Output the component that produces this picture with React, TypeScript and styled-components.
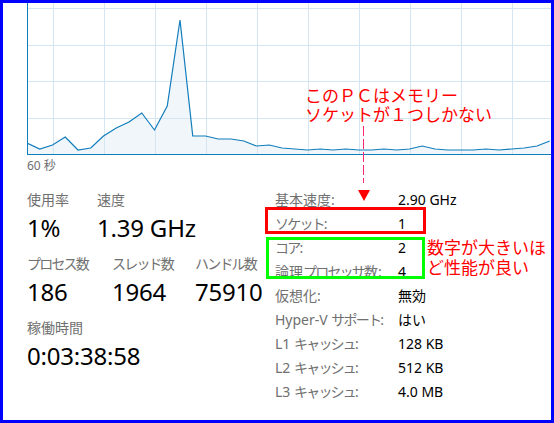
import React from 'react';
import styled, { createGlobalStyle } from 'styled-components';

const GlobalStyle = createGlobalStyle`
  html, body {
    margin: 0;
    padding: 0;
    background: #ffffff;
  }
  body {
    font-family: "Noto Sans", "Noto Sans CJK JP", sans-serif;
  }
`;

const Frame = styled.div`
  position: relative;
  width: 554px;
  height: 423px;
  box-sizing: border-box;
  border: 3px solid #0000ff;
  background: #ffffff;
  overflow: hidden;
`;

const ChartArea = styled.div`
  padding-left: 24px;
  height: 152px;
  overflow: hidden;
`;

const ChartCaption = styled.div`
  margin: 3px 0 0 24px;
  font-size: 12px;
  line-height: 16px;
  color: #707070;
`;

const Details = styled.div`
  display: grid;
  grid-template-columns: 248px 1fr;
  padding-left: 24px;
  margin-top: 13px;
`;

const LeftCol = styled.div`
  display: flex;
  flex-direction: column;
  gap: 12px;
  padding-top: 4px;
`;

const StatRow = styled.div`
  display: flex;
`;

const Stat = styled.div<{ $w: number }>`
  width: ${(p) => p.$w}px;
  display: flex;
  flex-direction: column;
  gap: 4px;
`;

const StatLabel = styled.div`
  font-size: 14px;
  line-height: 18px;
  color: #707070;
  white-space: nowrap;
`;

const StatValue = styled.div`
  font-size: 24px;
  line-height: 30px;
  color: #000000;
  white-space: nowrap;
  letter-spacing: -0.2px;
`;

const InfoList = styled.div`
  display: grid;
  grid-template-columns: 123px 1fr;
  grid-auto-rows: 24px;
  align-items: center;
  font-size: 14px;
`;

const InfoLabel = styled.div`
  color: #707070;
  white-space: nowrap;
`;

const InfoValue = styled.div`
  color: #000000;
  white-space: nowrap;
`;

// katakana in the UI font is a little narrower than full width
const Kana = styled.span`
  letter-spacing: -1.8px;
`;

const tighten = (s: string) =>
  s.split(/([\u30A0-\u30FF]+)/).map((part, i) =>
    /[\u30A0-\u30FF]/.test(part) ? <Kana key={i}>{part}</Kana> : part
  );

const Callout = styled.div<{ $x: number; $y: number; $size: number; $lh: number }>`
  position: absolute;
  left: ${(p) => p.$x}px;
  top: ${(p) => p.$y}px;
  font-family: "Noto Sans CJK JP", sans-serif;
  font-size: ${(p) => p.$size}px;
  line-height: ${(p) => p.$lh}px;
  color: #ff0000;
  white-space: pre;
`;

const DashLine = styled.div`
  position: absolute;
  left: 360px;
  top: 123px;
  width: 1px;
  height: 57px;
  background: repeating-linear-gradient(
    to bottom,
    #ff2a6d 0 10px,
    transparent 10px 13px
  );
`;

const Arrow = styled.div`
  position: absolute;
  left: 355px;
  top: 187px;
  width: 0;
  height: 0;
  border-left: 6px solid transparent;
  border-right: 6px solid transparent;
  border-top: 11px solid #ff0000;
`;

const MarkBox = styled.div<{ $x: number; $y: number; $w: number; $h: number; $c: string }>`
  position: absolute;
  left: ${(p) => p.$x}px;
  top: ${(p) => p.$y}px;
  width: ${(p) => p.$w}px;
  height: ${(p) => p.$h}px;
  box-sizing: border-box;
  border: 3px solid ${(p) => p.$c};
`;

const cpu = [
  143, 149, 145, 137, 150, 148, 136, 128, 122, 113, 130, 106, 20, 136, 136, 139,
  139, 141, 146, 145, 148, 149, 150, 149, 150, 149, 150, 150, 149, 150, 149, 146,
  149, 150, 150, 150, 149, 150, 149, 148, 146, 141,
];

const CpuChart = () => {
  const pts = cpu.map((y, i) => `${(i * 12.75).toFixed(2)},${y - 3}`);
  const line = pts.join(' ');
  const area = `0,151 ${line} ${((cpu.length - 1) * 12.75).toFixed(2)},151`;
  const vLines = [26, 77, 128, 179, 230, 281, 332, 383, 434, 485];
  const hLines = [5, 42, 78, 115];
  return (
    <svg width="524" height="152" viewBox="0 0 524 152">
      <polygon points={area} fill="#f1f6fa" />
      <g stroke="#d3e6f2" strokeWidth={1}>
        {vLines.map((x) => (
          <path key={`v${x}`} d={`M${x + 0.5} 0V151`} />
        ))}
        {hLines.map((y) => (
          <path key={`h${y}`} d={`M0 ${y + 0.5}H524`} />
        ))}
      </g>
      <polyline points={line} fill="none" stroke="#117dbb" strokeWidth={1.2} />
      <path d="M0.5 0V152M0 151.5H524" stroke="#117dbb" strokeWidth={1} fill="none" />
    </svg>
  );
};

const info = [
  ['基本速度:', '2.90 GHz'],
  ['ソケット:', '1'],
  ['コア:', '2'],
  ['論理プロセッサ数:', '4'],
  ['仮想化:', '無効'],
  ['Hyper-V サポート:', 'はい'],
  ['L1 キャッシュ:', '128 KB'],
  ['L2 キャッシュ:', '512 KB'],
  ['L3 キャッシュ:', '4.0 MB'],
];

const App = () => {
  return (
    <>
      <GlobalStyle />
      <Frame>
        <ChartArea>
          <CpuChart />
        </ChartArea>
        <ChartCaption>60 秒</ChartCaption>
        <Details>
          <LeftCol>
            <StatRow>
              <Stat $w={70}>
                <StatLabel>使用率</StatLabel>
                <StatValue>1%</StatValue>
              </Stat>
              <Stat $w={150}>
                <StatLabel>速度</StatLabel>
                <StatValue>1.39 GHz</StatValue>
              </Stat>
            </StatRow>
            <StatRow>
              <Stat $w={85}>
                <StatLabel>{tighten('プロセス数')}</StatLabel>
                <StatValue>186</StatValue>
              </Stat>
              <Stat $w={83}>
                <StatLabel>{tighten('スレッド数')}</StatLabel>
                <StatValue>1964</StatValue>
              </Stat>
              <Stat $w={80}>
                <StatLabel>{tighten('ハンドル数')}</StatLabel>
                <StatValue>75910</StatValue>
              </Stat>
            </StatRow>
            <StatRow>
              <Stat $w={200}>
                <StatLabel>稼働時間</StatLabel>
                <StatValue>0:03:38:58</StatValue>
              </Stat>
            </StatRow>
          </LeftCol>
          <InfoList>
            {info.map(([k, v]) => (
              <React.Fragment key={k}>
                <InfoLabel>{tighten(k)}</InfoLabel>
                <InfoValue>{v}</InfoValue>
              </React.Fragment>
            ))}
          </InfoList>
        </Details>

        <Callout $x={302} $y={82} $size={17} $lh={19}>
          {'このＰＣはメモリー\nソケットが１つしかない'}
        </Callout>
        <DashLine />
        <Arrow />
        <MarkBox $x={262} $y={204} $w={161} $h={27} $c="#ff0000" />
        <MarkBox $x={263} $y={234} $w={159} $h={42} $c="#00ff00" />
        <Callout $x={424} $y={234} $size={17} $lh={20}>
          {'数字が大きいほ\nど性能が良い'}
        </Callout>
      </Frame>
    </>
  );
};

export default App;
